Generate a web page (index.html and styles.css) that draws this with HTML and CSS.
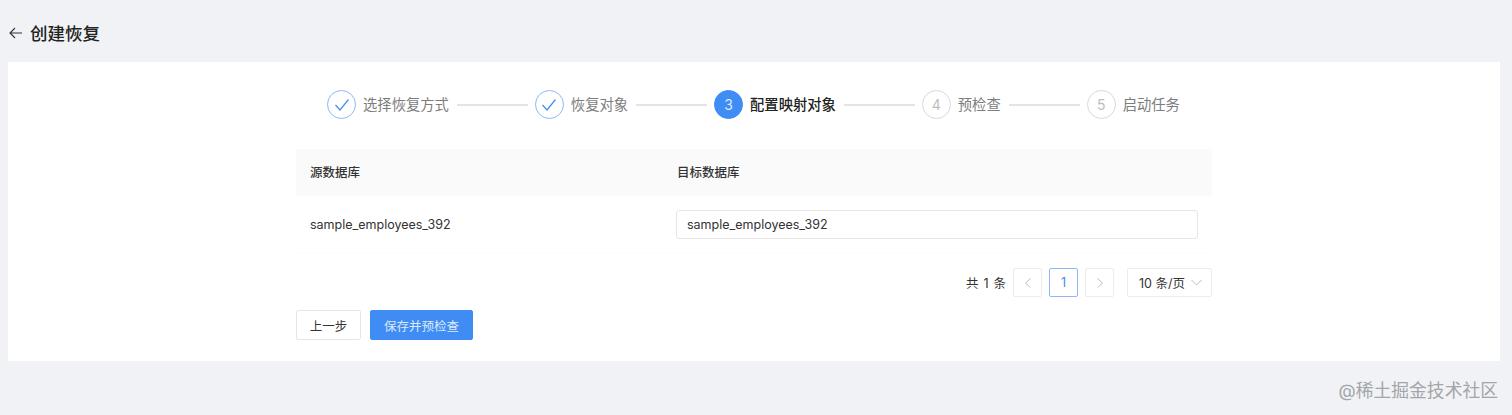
FILE: index.html
```html
<!DOCTYPE html>
<html lang="zh-CN">
<head>
  <meta charset="UTF-8" />
  <title>创建恢复</title>
  <link rel="stylesheet" href="styles.css">
</head>
<body>

  <header class="page-head">
    <svg class="back-icon" width="14" height="14" viewBox="0 0 14 14" fill="none" stroke="#333" stroke-width="1.1">
      <path d="M1 7H13M6 2L1 7L6 12" />
    </svg>
    <h1>创建恢复</h1>
  </header>

  <main class="card">
    <div class="content">
      <div class="steps">
        <div class="step done">
          <span class="dot">
            <svg width="16" height="14" viewBox="0 0 16 14" fill="none" stroke="#3f8cf5" stroke-width="1.2">
              <path d="M1.5 7L6 12L14.5 1.5" />
            </svg>
          </span>
          <span class="label">选择恢复方式</span>
        </div>
        <div class="line"></div>
        <div class="step done">
          <span class="dot">
            <svg width="16" height="14" viewBox="0 0 16 14" fill="none" stroke="#3f8cf5" stroke-width="1.2">
              <path d="M1.5 7L6 12L14.5 1.5" />
            </svg>
          </span>
          <span class="label">恢复对象</span>
        </div>
        <div class="line"></div>
        <div class="step active">
          <span class="dot">3</span>
          <span class="label">配置映射对象</span>
        </div>
        <div class="line"></div>
        <div class="step">
          <span class="dot">4</span>
          <span class="label">预检查</span>
        </div>
        <div class="line"></div>
        <div class="step">
          <span class="dot">5</span>
          <span class="label">启动任务</span>
        </div>
      </div>

      <div class="table">
        <div class="row head">
          <div class="col-src">源数据库</div>
          <div class="col-dst">目标数据库</div>
        </div>
        <div class="row body">
          <div class="col-src">sample_employees_392</div>
          <div class="col-dst">
            <input class="db-input" type="text" value="sample_employees_392">
          </div>
        </div>
      </div>

      <div class="pager">
        <span class="total">共 1 条</span>
        <span class="page-btn">
          <svg width="8" height="10" viewBox="0 0 8 10" fill="none" stroke="#bdbdbd" stroke-width="1"><path d="M6.5 0.5L1.5 5L6.5 9.5" /></svg>
        </span>
        <span class="page-btn current">1</span>
        <span class="page-btn">
          <svg width="8" height="10" viewBox="0 0 8 10" fill="none" stroke="#bdbdbd" stroke-width="1"><path d="M1.5 0.5L6.5 5L1.5 9.5" /></svg>
        </span>
        <span class="page-size">
          10 条/页
          <svg width="11" height="7" viewBox="0 0 11 7" fill="none" stroke="#bdbdbd" stroke-width="1"><path d="M0.5 1L5.5 6L10.5 1" /></svg>
        </span>
      </div>

      <div class="actions">
        <button class="btn" type="button">上一步</button>
        <button class="btn primary" type="button">保存并预检查</button>
      </div>
    </div>
  </main>

  <div class="watermark">@稀土掘金技术社区</div>

</body>
</html>
```

FILE: styles.css
```css
html, body {
  height: 415px;
  overflow: hidden;
}

body {
  font-family: Inter, "Liberation Sans", "Noto Sans CJK SC", sans-serif;
  background: #f0f2f5;
  color: #333;
  margin: 0;
  padding: 0;
  position: relative;
}

.page-head {
  height: 62px;
  padding: 2px 0 0 9px;
  box-sizing: border-box;
  display: flex;
  align-items: center;
  gap: 7px;
}

.back-icon {
  flex: none;
  margin-top: 2px;
}

.page-head h1 {
  margin: 0;
  font-size: 17.5px;
  font-weight: 500;
  color: #222;
}

.card {
  margin: 0 12px 0 8px;
  height: 299px;
  background: white;
  padding: 0 288px;
  box-sizing: border-box;
}

.content {
  width: 916px;
}

.steps {
  display: flex;
  align-items: center;
  justify-content: center;
  height: 87px;
  padding: 0 1px 2px 0;
  box-sizing: border-box;
}

.step {
  display: flex;
  align-items: center;
  gap: 7px;
  font-size: 14.3px;
  color: #7d7d7d;
}

.label {
  margin-bottom: 2px;
}

.dot {
  width: 29px;
  height: 29px;
  box-sizing: border-box;
  border-radius: 50%;
  border: 1px solid #d9d9d9;
  color: #bdbdbd;
  display: flex;
  align-items: center;
  justify-content: center;
  font-size: 14px;
}

.step.done .dot {
  border-color: #8db8f2;
}

.step.active .dot {
  background: #3f8cf5;
  border-color: #3f8cf5;
  color: #dce9fd;
}

.step.active .label {
  color: #222;
  font-weight: 500;
}

.line {
  width: 71px;
  height: 2px;
  margin: 0 7px 0 8px;
  background: #e4e4e4;
}

.table {
  font-size: 12.5px;
}

.row {
  display: flex;
  align-items: center;
  padding: 0 14px;
}

.row.head {
  height: 47px;
  padding-bottom: 2px;
  box-sizing: border-box;
  background: #fafafa;
  font-weight: 500;
  color: #333;
}

.row.body {
  height: 57px;
  border-bottom: 1px solid #fcfcfc;
}

.col-src {
  width: 367px;
  flex: none;
}

.col-dst {
  flex: 1;
}

.db-input {
  display: block;
  width: calc(100% + 1px);
  margin-left: -1px;
  height: 29px;
  box-sizing: border-box;
  border: 1px solid #e6e6e6;
  border-radius: 3px;
  padding: 0 10px;
  font: inherit;
  color: #333;
}

.pager {
  display: flex;
  align-items: center;
  justify-content: flex-end;
  margin-top: 14px;
  height: 29px;
  font-size: 12.5px;
}

.total {
  margin-right: 7px;
  word-spacing: 1.5px;
}

.page-btn {
  width: 29px;
  height: 29px;
  box-sizing: border-box;
  border: 1px solid #ececec;
  border-radius: 2px;
  margin-right: 7px;
  display: flex;
  align-items: center;
  justify-content: center;
}

.page-btn.current {
  border-color: #8db8f2;
  color: #3f8cf5;
}

.page-size {
  width: 85px;
  height: 29px;
  box-sizing: border-box;
  border: 1px solid #ececec;
  border-radius: 2px;
  margin-left: 6px;
  padding: 0 9px 0 11px;
  display: flex;
  align-items: center;
  justify-content: space-between;
}

.actions {
  display: flex;
  gap: 9px;
  margin-top: 13px;
}

.btn {
  height: 30px;
  width: 65px;
  padding: 0;
  background: white;
  border: 1px solid #e6e6e6;
  border-radius: 2px;
  font-family: inherit;
  font-size: 12.5px;
  color: #333;
}

.btn.primary {
  width: 103px;
  background: #3f8cf5;
  border-color: #3f8cf5;
  color: #dce9fd;
}

.watermark {
  position: absolute;
  right: 14px;
  top: 376px;
  font-size: 17.8px;
  color: #a3a5a8;
}
```
